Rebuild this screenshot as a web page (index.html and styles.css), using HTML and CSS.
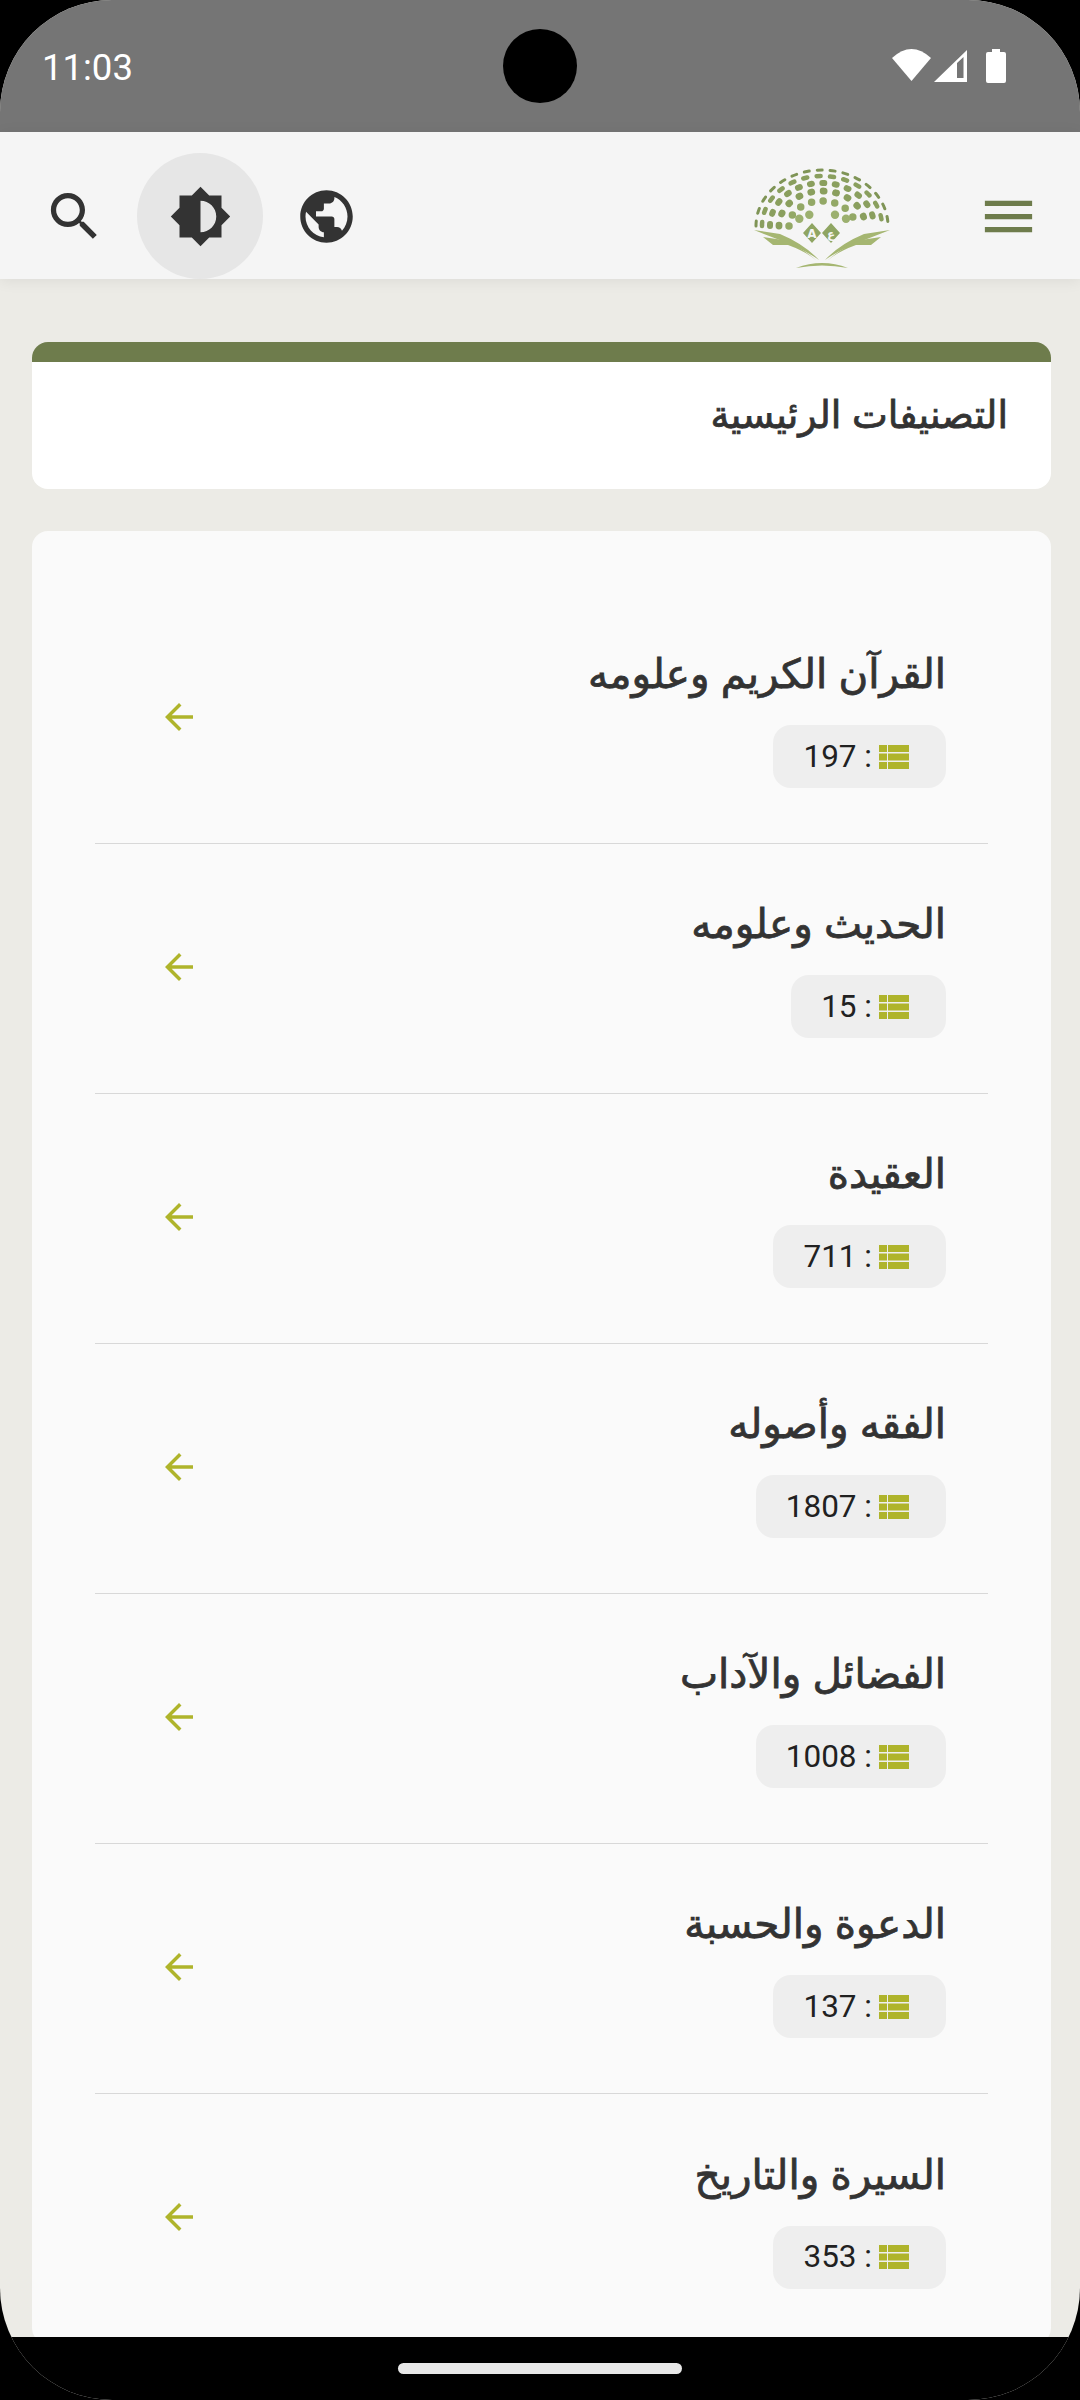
FILE: index.html
```html
<!DOCTYPE html>
<html lang="ar" dir="rtl">
<head>
<meta charset="utf-8">
<title>التصنيفات الرئيسية</title>
<link rel="stylesheet" href="styles.css">
</head>
<body>
<svg class="defs" aria-hidden="true">
  <symbol id="i-arrow" viewBox="0 0 24 24"><path d="M20 11H7.830l5.590-5.590L12 4l-8 8 8 8 1.410-1.410L7.830 13H20v-2z"/></symbol>
  <symbol id="i-list" viewBox="0 0 30 24"><path d="M0 0h8v7H0zM9 0h21v7H9zM0 8.500h8v7H0zM9 8.500h21v7H9zM0 17h8v7H0zM9 17h21v7H9z"/></symbol>
</svg>
<div class="screen">
  <header class="status" dir="ltr">
    <span class="time">11:03</span>
    <span class="camera"></span>
    <div class="status-icons">
      <svg class="wifi" viewBox="0 0 39 32"><path d="M0 9Q19.500-9 39 9L19.500 32z"/></svg>
      <svg class="signal" viewBox="0 0 33 32"><path fill-rule="evenodd" d="M33 0v32H0zM23 13v15h6.500V7z"/></svg>
      <svg class="battery" viewBox="0 0 20 34"><path d="M6 0h8v3h4q2 0 2 2v27q0 2-2 2H2q-2 0-2-2V5q0-2 2-2h4z"/></svg>
    </div>
  </header>

  <nav class="appbar" dir="ltr">
    <div class="actions">
      <button class="iconbtn" aria-label="بحث"><svg viewBox="0 0 24 24"><path d="M15.500 14h-.79l-.28-.27C15.410 12.590 16 11.110 16 9.500 16 5.910 13.090 3 9.500 3S3 5.910 3 9.500 5.910 16 9.500 16c1.610 0 3.090-.59 4.230-1.570l.27.28v.79l5 4.990L20.490 19l-4.990-5zm-6 0C7.010 14 5 11.990 5 9.500S7.010 5 9.500 5 14 7.010 14 9.500 11.990 14 9.500 14z"/></svg></button>
      <button class="iconbtn active" aria-label="السطوع"><svg viewBox="0 0 24 24"><path d="M20 15.310L23.310 12 20 8.690V4h-4.690L12 .69 8.690 4H4v4.690L.69 12 4 15.310V20h4.690L12 23.310 15.310 20H20v-4.690zM12 18V6c3.310 0 6 2.690 6 6s-2.690 6-6 6z"/></svg></button>
      <button class="iconbtn" aria-label="اللغة"><svg viewBox="0 0 24 24"><path d="M12 2C6.480 2 2 6.480 2 12s4.480 10 10 10 10-4.480 10-10S17.520 2 12 2zm-1 17.930c-3.950-.49-7-3.850-7-7.930 0-.62.08-1.210.21-1.790L9 15v1c0 1.100.9 2 2 2v1.930zm6.900-2.540c-.26-.81-1-1.390-1.900-1.390h-1v-3c0-.55-.45-1-1-1H8v-2h2c.55 0 1-.45 1-1V7h2c1.100 0 2-.9 2-2v-.41c2.930 1.190 5 4.060 5 7.410 0 2.080-.8 3.970-2.100 5.390z"/></svg></button>
    </div>
    <svg class="logo" viewBox="0 0 140 104" aria-label="شعار">
      <g fill="none" stroke-linecap="round">
        <path class="ring r1" d="M4 60A66 56 0 0 1 136 60"/>
        <path class="ring r2" d="M10 60A60 50 0 0 1 130 60"/>
        <path class="ring r3" d="M18 60A52 43 0 0 1 122 60"/>
        <path class="ring r4" d="M27 60A43 35 0 0 1 113 60"/>
        <path class="ring r5" d="M37 60A33 25 0 0 1 103 60"/>
      </g>
      <g class="inner">
        <circle cx="47.300" cy="52.700" r="4.200"/>
        <circle cx="57.300" cy="48.700" r="4.200"/>
        <circle cx="83" cy="48.700" r="4.200"/>
        <circle cx="94" cy="52.700" r="4.200"/>
      </g>
      <g class="wing">
        <path d="M2 64L28 68Q52 78 67 94Q50 82 25 73z"/>
        <path d="M11 71L21 79L36 79Q55 86 65 95Q48 80 31 74z"/>
        <path d="M138 64L112 68Q88 78 73 94Q90 82 115 73z"/>
        <path d="M129 71L119 79L104 79Q85 86 75 95Q92 80 109 74z"/>
        <path d="M44 102Q70 92 96 102Q70 97 44 102z"/>
      </g>
      <path class="gem" d="M60 57L69 67L60 77L51 67zM79 57L88 67L79 77L70 67z"/>
      <text class="logo-a" x="60" y="72">A</text>
      <text class="logo-a" x="79" y="72">ع</text>
    </svg>
    <button class="iconbtn menu" aria-label="القائمة"><svg viewBox="0 0 24 24"><path d="M3 18h18v-2H3v2zm0-5h18v-2H3v2zm0-7v2h18V6H3z"/></svg></button>
  </nav>

  <main class="content">
    <section class="title-card"><h1>التصنيفات الرئيسية</h1></section>
    <section class="list-card">
      <article class="item">
        <div class="item-text"><h2>القرآن الكريم وعلومه</h2>
          <div class="badge"><svg class="list-icon"><use href="#i-list"/></svg><span dir="ltr">197 :</span></div></div>
        <svg class="arrow"><use href="#i-arrow"/></svg>
      </article>
      <article class="item">
        <div class="item-text"><h2>الحديث وعلومه</h2>
          <div class="badge"><svg class="list-icon"><use href="#i-list"/></svg><span dir="ltr">15 :</span></div></div>
        <svg class="arrow"><use href="#i-arrow"/></svg>
      </article>
      <article class="item">
        <div class="item-text"><h2>العقيدة</h2>
          <div class="badge"><svg class="list-icon"><use href="#i-list"/></svg><span dir="ltr">711 :</span></div></div>
        <svg class="arrow"><use href="#i-arrow"/></svg>
      </article>
      <article class="item">
        <div class="item-text"><h2>الفقه وأصوله</h2>
          <div class="badge"><svg class="list-icon"><use href="#i-list"/></svg><span dir="ltr">1807 :</span></div></div>
        <svg class="arrow"><use href="#i-arrow"/></svg>
      </article>
      <article class="item">
        <div class="item-text"><h2>الفضائل والآداب</h2>
          <div class="badge"><svg class="list-icon"><use href="#i-list"/></svg><span dir="ltr">1008 :</span></div></div>
        <svg class="arrow"><use href="#i-arrow"/></svg>
      </article>
      <article class="item">
        <div class="item-text"><h2>الدعوة والحسبة</h2>
          <div class="badge"><svg class="list-icon"><use href="#i-list"/></svg><span dir="ltr">137 :</span></div></div>
        <svg class="arrow"><use href="#i-arrow"/></svg>
      </article>
      <article class="item">
        <div class="item-text"><h2>السيرة والتاريخ</h2>
          <div class="badge"><svg class="list-icon"><use href="#i-list"/></svg><span dir="ltr">353 :</span></div></div>
        <svg class="arrow"><use href="#i-arrow"/></svg>
      </article>
    </section>
  </main>

  <footer class="navbar"><span class="pill"></span></footer>
</div>
</body>
</html>
```

FILE: styles.css
```css
* { box-sizing: border-box; }
html, body { margin: 0; padding: 0; background: #000; }
body { width: 1080px; height: 2400px; overflow: hidden; font-family: "Liberation Sans", "DejaVu Sans", sans-serif; color: #333; }
.defs { display: none; }

.screen { position: relative; width: 1080px; height: 2400px; border-radius: 112px; overflow: hidden; display: flex; flex-direction: column; background: #ecebe6; }

.status { position: relative; height: 132px; flex: none; background: #757575; display: flex; justify-content: space-between; padding: 47px 74px 0 42px; color: #fff; }
.time { font: 400 36.500px/42px Roboto, sans-serif; }
.camera { position: absolute; left: 503px; top: 29px; width: 74px; height: 74px; border-radius: 50%; background: #000; }
.status-icons { display: flex; align-items: flex-start; }
.status-icons svg { fill: #fff; display: block; }
.wifi { width: 39px; height: 32px; margin-top: 2px; }
.signal { width: 33px; height: 32px; margin: 3px 0 0 3px; }
.battery { width: 20px; height: 34px; margin: 2px 0 0 19px; }

.appbar { height: 147px; flex: none; background: #f5f5f5; display: flex; align-items: flex-end; padding: 0 9px 0 11px; position: relative; z-index: 1; box-shadow: 0 2px 14px rgba(0, 0, 0, .07); }
.actions { display: flex; }
.iconbtn { width: 126px; height: 126px; border: 0; padding: 0; background: none; border-radius: 50%; display: flex; align-items: center; justify-content: center; fill: #333; }
.iconbtn svg { width: 63px; height: 63px; display: block; }
.iconbtn.active { background: #e6e6e6; }
.iconbtn.menu { fill: #6e7c4c; }
.logo { width: 140px; height: 104px; margin: 0 53px 9px auto; display: block; }
.ring { stroke: #8a9f5e; }
.r1 { stroke-width: 3; stroke-dasharray: 5 8; stroke: #7f9456; }
.r2 { stroke-width: 4.500; stroke-dasharray: 4 9.500; }
.r3 { stroke-width: 6; stroke-dasharray: 2 10.500; }
.r4 { stroke-width: 6.800; stroke-dasharray: 1 11.500; }
.r5 { stroke-width: 7.500; stroke-dasharray: 0 11.700; stroke: #93a866; }
.inner { fill: #9cb06f; }
.wing { fill: #a5b671; }
.gem { fill: #8fa562; }
.logo-a { fill: #f5f5f5; font: 700 12px "DejaVu Sans", sans-serif; text-anchor: middle; }

.content { flex: 1; min-height: 0; overflow: hidden; padding: 63px 29px 0 32px; display: flex; flex-direction: column; gap: 42px; }
.title-card { flex: none; height: 147px; background: #fff; border-top: 20px solid #6e7c4c; border-radius: 16px; padding: 0 43px; }
.title-card h1 { margin: 0; font-size: 38px; font-weight: 400; -webkit-text-stroke: .8px #333; line-height: 70px; padding-top: 18px; color: #333; }

.list-card { flex: none; background: #fafafa; border-radius: 16px; padding: 62.500px 63px 0; }
.item { height: 250px; display: flex; align-items: center; justify-content: space-between; padding: 0 42px 3px 63px; border-bottom: 1.500px solid #d8d8d8; }
.item:last-child { border-bottom: 0; }
.item-text { display: flex; flex-direction: column; align-items: flex-start; }
.item-text h2 { margin: 0 0 21px; font-size: 40.500px; font-weight: 400; -webkit-text-stroke: .8px #333; line-height: 59px; color: #333; }
.badge { height: 63px; border-radius: 18px; background: #eee; display: flex; align-items: center; gap: 7px; padding: 0 37px 0 30px; font: 400 31.500px/1 Roboto, sans-serif; color: #212121; }
.list-icon { width: 30px; height: 24px; fill: #afb42b; display: block; }
.arrow { width: 42px; height: 42px; fill: #afb42b; display: block; }

.navbar { height: 63px; flex: none; background: #000; display: flex; justify-content: center; align-items: flex-start; padding-top: 26px; position: relative; z-index: 2; }
.pill { width: 284px; height: 11px; border-radius: 6px; background: #e8e8e8; }
```
